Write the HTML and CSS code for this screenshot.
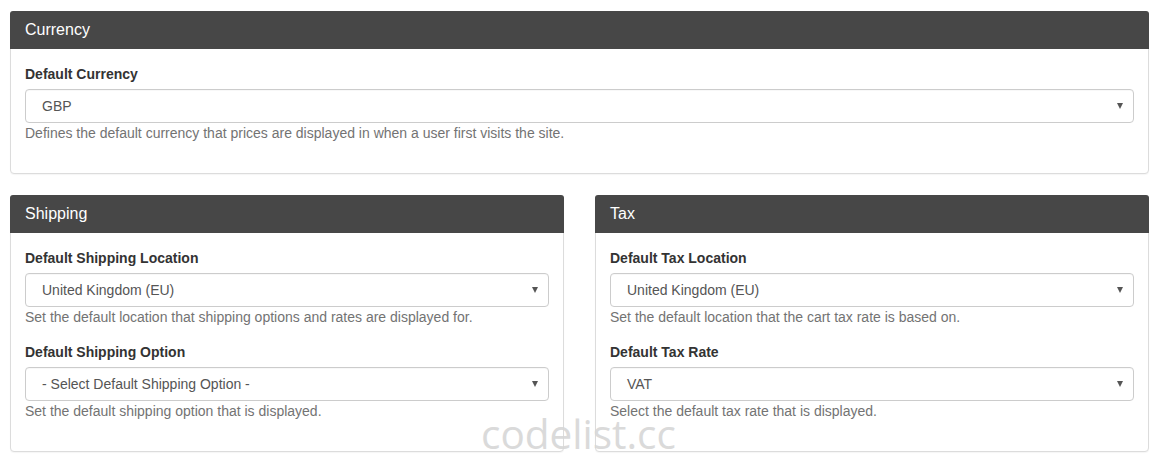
FILE: index.html
```html
<!DOCTYPE html>
<html>
<head>
<meta charset="utf-8">
<link rel="stylesheet" href="styles.css">
</head>
<body>
<div class="page">
  <section class="panel">
    <div class="panel-heading"><h3>Currency</h3></div>
    <div class="panel-body">
      <div class="form-group">
        <label>Default Currency</label>
        <div class="select"><span>GBP</span><span class="caret"></span></div>
        <p class="help">Defines the default currency that prices are displayed in when a user first visits the site.</p>
      </div>
    </div>
  </section>
  <div class="row">
    <section class="panel">
      <div class="panel-heading"><h3>Shipping</h3></div>
      <div class="panel-body">
        <div class="form-group">
          <label>Default Shipping Location</label>
          <div class="select"><span>United Kingdom (EU)</span><span class="caret"></span></div>
          <p class="help">Set the default location that shipping options and rates are displayed for.</p>
        </div>
        <div class="form-group">
          <label>Default Shipping Option</label>
          <div class="select"><span>- Select Default Shipping Option -</span><span class="caret"></span></div>
          <p class="help">Set the default shipping option that is displayed.</p>
        </div>
      </div>
    </section>
    <section class="panel">
      <div class="panel-heading"><h3>Tax</h3></div>
      <div class="panel-body">
        <div class="form-group">
          <label>Default Tax Location</label>
          <div class="select"><span>United Kingdom (EU)</span><span class="caret"></span></div>
          <p class="help">Set the default location that the cart tax rate is based on.</p>
        </div>
        <div class="form-group">
          <label>Default Tax Rate</label>
          <div class="select"><span>VAT</span><span class="caret"></span></div>
          <p class="help">Select the default tax rate that is displayed.</p>
        </div>
      </div>
    </section>
  </div>
</div>
<div class="watermark">codelist.cc</div>
</body>
</html>
```
FILE: styles.css
```css
* { box-sizing: border-box; }
html, body { margin: 0; padding: 0; background: #fff; }
body {
  font-family: "Liberation Sans", Arial, sans-serif;
  font-size: 14px;
  line-height: 20px;
  color: #333;
  position: relative;
  height: 463px;
  overflow: hidden;
}
.page {
  padding: 11px 0 0 10px;
  width: 1149px;
  display: flex;
  flex-direction: column;
  gap: 21px;
}
.row {
  display: grid;
  grid-template-columns: 554px 554px;
  column-gap: 31px;
}
.panel {
  border: 1px solid #dcdcdc;
  border-radius: 4px;
  background: #fff;
  box-shadow: 0 1px 1px rgba(0,0,0,0.04);
}
.panel-heading {
  background: #474747;
  border-radius: 3px 3px 0 0;
  margin: -1px -1px 0 -1px;
  height: 38px;
  padding: 0 15px;
  display: flex;
  align-items: center;
}
.panel-heading h3 {
  margin: 0;
  font-size: 16px;
  font-weight: normal;
  color: #fff;
  line-height: 18px;
}
.panel-body {
  padding: 15px 14px 0 14px;
}
.form-group { margin-bottom: 15px; }
.form-group:last-child { margin-bottom: 30px; }
label {
  display: block;
  font-weight: bold;
  color: #333;
  margin-bottom: 5px;
}
.select {
  height: 34px;
  border: 1px solid #ccc;
  border-radius: 4px;
  padding: 0 10px 0 16px;
  display: flex;
  align-items: center;
  justify-content: space-between;
  color: #555;
  box-shadow: inset 0 1px 1px rgba(0,0,0,0.03);
}
.caret {
  width: 0;
  height: 0;
  border-left: 3.5px solid transparent;
  border-right: 3.5px solid transparent;
  border-top: 6px solid #555;
}
.help {
  margin: 0;
  color: #737373;
}
.watermark {
  position: absolute;
  left: 481px;
  top: 422px;
  font-family: "Open Sans", sans-serif;
  font-size: 40.5px;
  line-height: 24px;
  color: #d7d7d7;
  opacity: 0.9;
}
```
